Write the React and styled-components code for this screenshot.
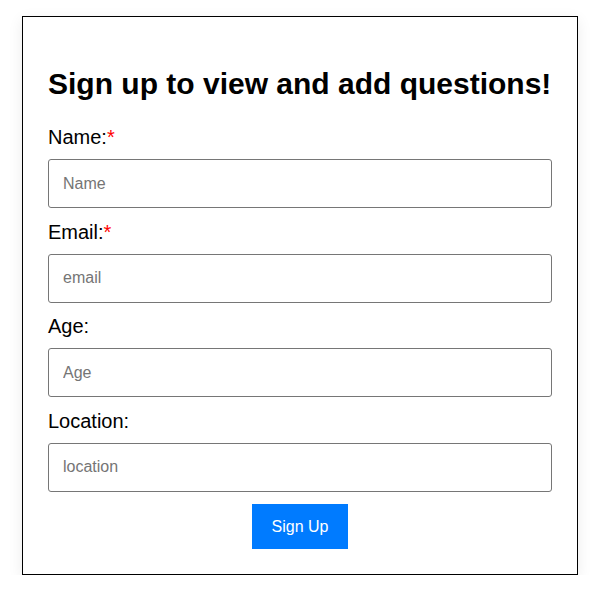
import React from "react";
import styled, { createGlobalStyle } from "styled-components";

const GlobalStyle = createGlobalStyle`
  body {
    margin: 0;
    background: #fff;
    font-family: "Liberation Sans", Arial, sans-serif;
  }
`;

const fields = [
  { id: "name", label: "Name:", placeholder: "Name", required: true },
  { id: "email", label: "Email:", placeholder: "email", required: true },
  { id: "age", label: "Age:", placeholder: "Age" },
  { id: "location", label: "Location:", placeholder: "location" },
];

const App = () => {
  return (
    <Page>
      <GlobalStyle />
      <Card>
        <Title>Sign up to view and add questions!</Title>
        {fields.map((field) => (
          <Field key={field.id}>
            <Label htmlFor={field.id}>
              {field.label}
              {field.required && <Star>*</Star>}
            </Label>
            <Input id={field.id} type="text" placeholder={field.placeholder} />
          </Field>
        ))}
        <Actions>
          <SubmitButton type="submit">Sign Up</SubmitButton>
        </Actions>
      </Card>
    </Page>
  );
};

export default App;

const Page = styled.div`
  padding: 16px 0 0 22px;
`;

const Card = styled.form`
  box-sizing: border-box;
  width: 556px;
  padding: 25px;
  border: 1px solid #000;
  background: #fff;
  box-shadow: 0 4px 14px rgba(0, 0, 0, 0.08);
  display: flex;
  flex-direction: column;
`;

const Title = styled.h2`
  margin: 25px 0 25px;
  font-size: 30px;
  font-weight: bold;
  line-height: 34px;
  color: #000;
  white-space: nowrap;
`;

const Field = styled.div`
  display: flex;
  flex-direction: column;
  margin-bottom: 12.6px;
`;

const Label = styled.label`
  font-size: 20px;
  line-height: 23px;
  color: #000;
  margin-bottom: 10px;
`;

const Star = styled.span`
  color: #ff0000;
`;

const Input = styled.input`
  box-sizing: border-box;
  width: 100%;
  height: 49px;
  padding: 0 14px;
  border: 1px solid #767676;
  border-radius: 3px;
  font-family: "Liberation Sans", Arial, sans-serif;
  font-size: 16px;
  color: #000;
  &::placeholder {
    color: #757575;
  }
`;

const Actions = styled.div`
  display: flex;
  justify-content: center;
`;

const SubmitButton = styled.button`
  width: 96px;
  height: 45px;
  border: none;
  border-radius: 0;
  background: #007bff;
  color: #fff;
  font-family: "Liberation Sans", Arial, sans-serif;
  font-size: 16px;
  cursor: pointer;
`;
